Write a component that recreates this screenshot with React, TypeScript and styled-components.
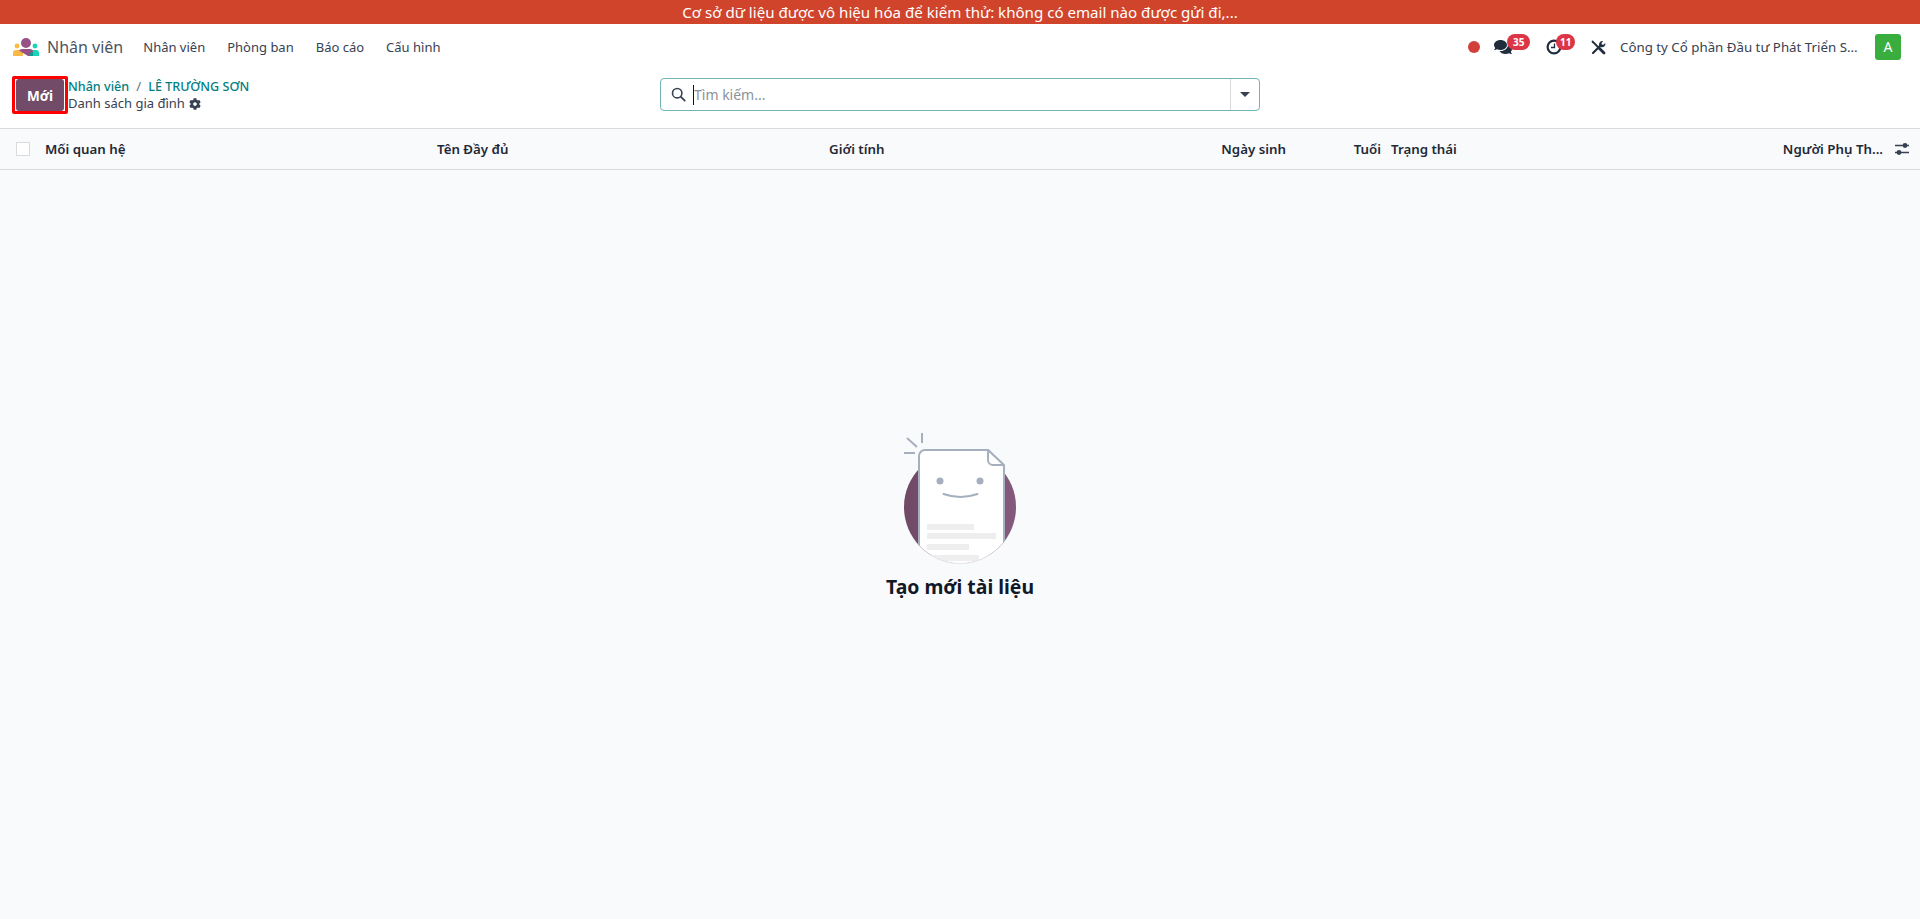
import React from "react";
import styled, { createGlobalStyle } from "styled-components";
import { FaCog, FaComments } from "react-icons/fa";

const GlobalStyle = createGlobalStyle`
  html, body {
    margin: 0;
    height: 100%;
  }
  body {
    font-family: "Noto Sans", "Liberation Sans", sans-serif;
    font-size: 13.3px;
    color: #212529;
    background: #f9fafb;
  }
  * {
    box-sizing: border-box;
  }
`;

function HrLogo() {
  return (
    <svg width="26" height="18" viewBox="0 0 26 18">
      <circle cx="4" cy="8" r="2.4" fill="#fbb945" />
      <circle cx="22" cy="8" r="2.4" fill="#1ad3bb" />
      <path d="M0 18v-3a3 3 0 0 1 3-3h7v6z" fill="#fbb945" />
      <path d="M26 18v-3a3 3 0 0 0-3-3h-7v6z" fill="#1ad3bb" />
      <circle cx="13" cy="5" r="5" fill="#985184" />
      <path d="M6 12.5a4 4 0 0 1 3-1.5h8a3 3 0 0 1 3 3v4h-5z" fill="#985184" />
      <path d="M20 14v4h-3.5a3 3 0 0 1 3.5-4z" fill="#0f9c8c" />
    </svg>
  );
}

function ActivityIcon() {
  return (
    <svg width="16" height="16" viewBox="0 0 16 16">
      <circle cx="8" cy="8" r="6.4" fill="none" stroke="#1f2d3d" strokeWidth="2.2" />
      <path d="M8.5 4.5v4H5" fill="none" stroke="#1f2d3d" strokeWidth="1.3" />
    </svg>
  );
}

function ToolsIcon() {
  return (
    <svg width="15" height="15" viewBox="0 0 15 15">
      <path d="M1.5 1.5L7 7" stroke="#1f2d3d" strokeWidth="1.8" strokeLinecap="round" />
      <path d="M8.5 8.5l4.5 4.5" stroke="#1f2d3d" strokeWidth="2.8" strokeLinecap="round" />
      <path d="M2 13L9.5 5.5" stroke="#1f2d3d" strokeWidth="2.2" strokeLinecap="round" />
      <path d="M8.3 5.7a3.4 3.4 0 0 1 3.9-4.7L10.5 2.9l.3 1.6 1.6.3L14.3 3a3.4 3.4 0 0 1-4.7 3.900z" fill="#1f2d3d" />
    </svg>
  );
}

function OptionsIcon() {
  return (
    <svg width="14" height="12" viewBox="0 0 14 12">
      <path d="M0 2.5h14M0 9.5h14" stroke="#374151" strokeWidth="1.3" />
      <circle cx="10" cy="2.5" r="2.4" fill="#374151" />
      <circle cx="4" cy="9.5" r="2.4" fill="#374151" />
    </svg>
  );
}

function SearchIcon() {
  return (
    <svg width="15" height="15" viewBox="0 0 15 15">
      <circle cx="6.2" cy="6.2" r="4.7" fill="none" stroke="#374151" strokeWidth="1.6" />
      <path d="M9.7 9.7l4 4" stroke="#374151" strokeWidth="1.8" strokeLinecap="round" />
    </svg>
  );
}

function EmptyArt() {
  return (
    <svg width="120" height="140" viewBox="0 0 120 140">
      <defs>
        <linearGradient id="discFill" x1="0" y1="0" x2="1" y2="0">
          <stop offset="0" stopColor="#6f4a65" />
          <stop offset="1" stopColor="#85597c" />
        </linearGradient>
        <clipPath id="docClip">
          <rect x="0" y="0" width="120" height="77" />
          <circle cx="60" cy="77" r="56" />
        </clipPath>
      </defs>
      <circle cx="60" cy="78" r="56" fill="#e3e4e8" />
      <circle cx="60" cy="77" r="56" fill="url(#discFill)" />
      <g clipPath="url(#docClip)">
        <path d="M19 140V26a6 6 0 0 1 6-6h63l16 16v104z" fill="#fff" stroke="#a5afbd" strokeWidth="2" />
        <path d="M19 125h85v15H19z" fill="#fff" />
        <rect x="27" y="94" width="47" height="6" fill="#eeeeee" />
        <rect x="27" y="103" width="69" height="6" fill="#eeeeee" />
        <rect x="27" y="114" width="42" height="6" fill="#eeeeee" />
        <rect x="27" y="125" width="52" height="6" fill="#eeeeee" />
      </g>
      <path d="M88 20v10a5 5 0 0 0 5 5h11z" fill="#fff" stroke="#a5afbd" strokeWidth="2" strokeLinejoin="round" />
      <path d="M4 23h11M7 8l10 9M22 3v10" stroke="#a5afbd" strokeWidth="2" fill="none" />
      <circle cx="40" cy="51" r="3.5" fill="#a5afbd" />
      <circle cx="80" cy="51" r="3.5" fill="#a5afbd" />
      <path d="M43.5 64q17 6 34 0" stroke="#a5afbd" strokeWidth="2" fill="none" strokeLinecap="round" />
    </svg>
  );
}

export default function App() {
  return (
    <Page>
      <GlobalStyle />
      <Ribbon>Cơ sở dữ liệu được vô hiệu hóa để kiểm thử: không có email nào được gửi đi,...</Ribbon>
      <NavBar>
        <Brand>
          <HrLogo />
          <BrandName>Nhân viên</BrandName>
        </Brand>
        <Menu>
          <MenuItem>Nhân viên</MenuItem>
          <MenuItem>Phòng ban</MenuItem>
          <MenuItem>Báo cáo</MenuItem>
          <MenuItem>Cấu hình</MenuItem>
        </Menu>
        <Systray>
          <StatusDot />
          <TrayIcon $width={36}>
            <FaComments size={18} color="#1f2d3d" />
            <Badge $left={13} $pad={6}>35</Badge>
          </TrayIcon>
          <TrayIcon $width={29}>
            <ActivityIcon />
            <Badge $left={10} $pad={4}>11</Badge>
          </TrayIcon>
          <ToolsIcon />
          <Company>Công ty Cổ phần Đầu tư Phát Triển S...</Company>
          <Avatar>A</Avatar>
        </Systray>
      </NavBar>
      <ControlPanel>
        <LeftSide>
          <Highlight>
            <NewButton>Mới</NewButton>
          </Highlight>
          <Crumbs>
            <CrumbLine>
              <CrumbLink>Nhân viên</CrumbLink>
              <CrumbSep>/</CrumbSep>
              <CrumbLink>LÊ TRƯỜNG SƠN</CrumbLink>
            </CrumbLine>
            <CrumbCurrent>
              Danh sách gia đình <FaCog size={12} color="#374151" />
            </CrumbCurrent>
          </Crumbs>
        </LeftSide>
        <SearchBox>
          <SearchIcon />
          <Caret />
          <SearchText>Tìm kiếm...</SearchText>
          <SearchToggle>
            <Arrow />
          </SearchToggle>
        </SearchBox>
      </ControlPanel>
      <TableHead>
        <CheckCell>
          <CheckBox />
        </CheckCell>
        <HeadCell>Mối quan hệ</HeadCell>
        <HeadCell>Tên Đầy đủ</HeadCell>
        <HeadCell>Giới tính</HeadCell>
        <HeadCell $right>Ngày sinh</HeadCell>
        <AgeCell $right>Tuổi</AgeCell>
        <HeadCell>Trạng thái</HeadCell>
        <HeadCell $right>Người Phụ Th...</HeadCell>
        <OptionCell>
          <OptionsIcon />
        </OptionCell>
      </TableHead>
      <Empty>
        <EmptyArt />
        <EmptyTitle>Tạo mới tài liệu</EmptyTitle>
      </Empty>
    </Page>
  );
}

const Page = styled.div`
  height: 919px;
  display: flex;
  flex-direction: column;
  overflow: hidden;
`;

const Ribbon = styled.div`
  height: 24px;
  background: #d0442c;
  color: #fff;
  font-size: 15.1px;
  line-height: 24px;
  text-align: center;
`;

const NavBar = styled.div`
  height: 46px;
  background: #fff;
  display: flex;
  align-items: center;
  padding: 0 19px 0 13px;
`;

const Brand = styled.div`
  display: flex;
  align-items: center;
  gap: 8px;
`;

const BrandName = styled.span`
  font-size: 16px;
  color: #4b5563;
`;

const Menu = styled.div`
  display: flex;
  gap: 22px;
  margin-left: 20px;
`;

const MenuItem = styled.span`
  font-size: 13px;
  color: #374151;
`;

const Systray = styled.div`
  margin-left: auto;
  display: flex;
  align-items: center;
  gap: 16px;
`;

const StatusDot = styled.span`
  width: 12px;
  height: 12px;
  margin-right: -2px;
  border-radius: 50%;
  background: #d23f3a;
`;

const TrayIcon = styled.span<{ $width: number }>`
  position: relative;
  display: flex;
  width: ${(props) => props.$width}px;
  height: 20px;
  align-items: center;
`;

const Badge = styled.span<{ $left: number; $pad: number }>`
  position: absolute;
  left: ${(props) => props.$left}px;
  top: -3px;
  height: 16px;
  padding: 0 ${(props) => props.$pad}px;
  border-radius: 8px;
  background: #dc3545;
  color: #fff;
  font-size: 10px;
  font-weight: 700;
  line-height: 16px;
  text-align: center;
`;

const Company = styled.span`
  width: 237px;
  margin-left: -2px;
  color: #374151;
  white-space: nowrap;
`;

const Avatar = styled.span`
  width: 26px;
  height: 26px;
  margin-left: 2px;
  border-radius: 3px;
  background: #3aad3f;
  color: #fff;
  font-size: 14px;
  line-height: 26px;
  text-align: center;
`;

const ControlPanel = styled.div`
  height: 59px;
  background: #fff;
  border-bottom: 1px solid #d8dadd;
  display: flex;
  align-items: flex-start;
  padding: 6px 12px 0;
`;

const LeftSide = styled.div`
  display: flex;
  align-items: center;
  width: 648px;
  flex: none;
`;

const Highlight = styled.div`
  width: 56px;
  height: 38px;
  padding: 0 1px;
  border: 3px solid #f00;
  border-radius: 2px;
  background: #fff;
`;

const NewButton = styled.button`
  display: block;
  width: 100%;
  height: 100%;
  padding: 0;
  border: 0;
  border-radius: 3px;
  background: #714b67;
  color: #fff;
  font-family: inherit;
  font-size: 13.6px;
  font-weight: 700;
`;

const Crumbs = styled.div`
  display: flex;
  flex-direction: column;
  line-height: 17px;
`;

const CrumbLine = styled.div`
  display: flex;
  gap: 7px;
`;

const CrumbLink = styled.span`
  color: #017e84;
  font-size: 12.6px;
  font-weight: 500;
`;

const CrumbSep = styled.span`
  color: #6b7280;
`;

const CrumbCurrent = styled.div`
  display: flex;
  align-items: center;
  gap: 4px;
  font-size: 13px;
  color: #374151;
`;

const SearchBox = styled.div`
  width: 600px;
  height: 33px;
  margin-top: 2px;
  display: flex;
  align-items: center;
  padding-left: 10px;
  border: 1px solid #6fb4b8;
  border-radius: 4px;
  background: #fff;
`;

const Caret = styled.span`
  width: 1px;
  height: 20px;
  margin-left: 7px;
  background: #111;
`;

const SearchText = styled.span`
  flex: 1;
  color: #8b929b;
  font-size: 14px;
`;

const SearchToggle = styled.span`
  width: 29px;
  height: 100%;
  flex: none;
  display: flex;
  align-items: center;
  justify-content: center;
  border-left: 1px solid #d8dadd;
`;

const Arrow = styled.span`
  border-left: 5px solid transparent;
  border-right: 5px solid transparent;
  border-top: 5px solid #374151;
`;

const TableHead = styled.div`
  height: 41px;
  flex: none;
  display: grid;
  grid-template-columns: 37px 392px 392px 392px 81px 89px 1fr 130px 29px;
  align-items: center;
  background: #f9fafb;
  border-bottom: 1px solid #d8dadd;
`;

const CheckCell = styled.div`
  display: flex;
  padding-left: 16px;
`;

const CheckBox = styled.span`
  width: 14px;
  height: 14px;
  border: 1px solid #d8dadd;
  background: #fff;
`;

const HeadCell = styled.div<{ $right?: boolean }>`
  padding: 0 8px;
  font-weight: 600;
  color: #1f2937;
  white-space: nowrap;
  text-align: ${(props) => (props.$right ? "right" : "left")};
`;

const AgeCell = styled(HeadCell)`
  padding-right: 2px;
`;

const OptionCell = styled.div`
  display: flex;
  justify-content: center;
  padding-right: 7px;
`;

const Empty = styled.div`
  flex: 1;
  display: flex;
  flex-direction: column;
  align-items: center;
  padding-top: 260px;
`;

const EmptyTitle = styled.div`
  margin-top: 3px;
  font-size: 19.4px;
  font-weight: 700;
  color: #111827;
`;
